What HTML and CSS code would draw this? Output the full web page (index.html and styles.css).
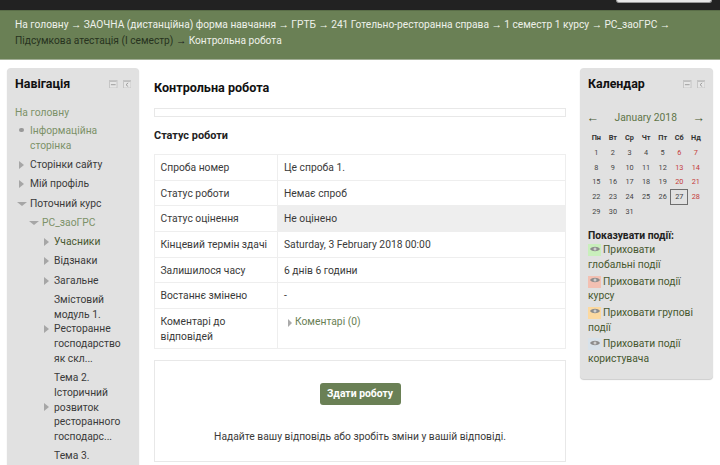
FILE: index.html
```html
<!DOCTYPE html>
<html lang="uk">
<head>
<meta charset="utf-8">
<title>Контрольна робота</title>
<link rel="stylesheet" href="styles.css">
</head>
<body>
<header class="topbar"><div class="search"></div></header>
<nav class="crumbs">
<a href="#">На головну</a> <span class="sep">→</span> <a href="#">ЗАОЧНА (дистанційна) форма навчання</a> <span class="sep">→</span> <a href="#">ГРТБ</a> <span class="sep">→</span> <a href="#">241 Готельно-ресторанна справа</a> <span class="sep">→</span> <a href="#">1 семестр 1 курсу</a> <span class="sep">→</span> <a href="#">РС_заоГРС</a> <span class="sep">→</span> <a href="#" class="dim">Підсумкова атестація (І семестр)</a> <span class="sep">→</span> <a href="#">Контрольна робота</a>
</nav>
<div class="layout">
<aside class="block nav-block">
  <div class="block-head"><h2>Навігація</h2><div class="tools">
    <svg class="tool" viewBox="0 0 9 9"><rect x=".5" y=".5" width="8" height="8" fill="#e6e6e6" stroke="#c4c4c4"/><rect x="1" y="1" width="7" height="1" fill="#bbb"/><rect x="2" y="4.5" width="5" height="1" fill="#999"/></svg>
    <svg class="tool" viewBox="0 0 9 9"><rect x=".5" y=".5" width="8" height="8" fill="#e6e6e6" stroke="#c4c4c4"/><rect x="1" y="1" width="7" height="1" fill="#bbb"/><path d="M5.5 3 3.2 5l2.3 2" fill="none" stroke="#999"/></svg>
  </div></div>
  <a class="nav-home" href="#">На головну</a>
  <ul class="tree">
    <li class="item leaf lvl1 green"><span>Інформаційна сторінка</span></li>
    <li class="item closed lvl1"><span>Сторінки сайту</span></li>
    <li class="item closed lvl1"><span>Мій профіль</span></li>
    <li class="item open lvl1"><span>Поточний курс</span></li>
    <li class="item open lvl2 green"><span>РС_заоГРС</span></li>
    <li class="item closed lvl3 dark"><span>Учасники</span></li>
    <li class="item closed lvl3"><span>Відзнаки</span></li>
    <li class="item closed lvl3"><span>Загальне</span></li>
    <li class="item closed lvl3"><span>Змістовий модуль 1. Ресторанне господарство як скл...</span></li>
    <li class="item closed lvl3"><span>Тема 2. Історичний розвиток ресторанного господарс...</span></li>
    <li class="item plain lvl3"><span>Тема 3.</span></li>
  </ul>
</aside>
<main class="main">
  <h1>Контрольна робота</h1>
  <div class="intro"></div>
  <h3>Статус роботи</h3>
  <table class="status">
    <tr><th>Спроба номер</th><td>Це спроба 1.</td></tr>
    <tr><th>Статус роботи</th><td>Немає спроб</td></tr>
    <tr><th>Статус оцінення</th><td class="shade">Не оцінено</td></tr>
    <tr><th>Кінцевий термін здачі</th><td>Saturday, 3 February 2018 00:00</td></tr>
    <tr><th>Залишилося часу</th><td>6 днів 6 години</td></tr>
    <tr><th>Востаннє змінено</th><td>-</td></tr>
    <tr><th>Коментарі до відповідей</th><td><span class="comments"><i class="tri"></i><a href="#">Коментарі (0)</a></span></td></tr>
  </table>
  <section class="submit">
    <button type="button">Здати роботу</button>
    <p>Надайте вашу відповідь або зробіть зміни у вашій відповіді.</p>
  </section>
</main>
<aside class="block cal-block">
  <div class="block-head"><h2>Календар</h2><div class="tools">
    <svg class="tool" viewBox="0 0 9 9"><rect x=".5" y=".5" width="8" height="8" fill="#e6e6e6" stroke="#c4c4c4"/><rect x="1" y="1" width="7" height="1" fill="#bbb"/><rect x="2" y="4.5" width="5" height="1" fill="#999"/></svg>
    <svg class="tool" viewBox="0 0 9 9"><rect x=".5" y=".5" width="8" height="8" fill="#e6e6e6" stroke="#c4c4c4"/><rect x="1" y="1" width="7" height="1" fill="#bbb"/><path d="M5.5 3 3.2 5l2.3 2" fill="none" stroke="#999"/></svg>
  </div></div>
  <div class="month"><span>←</span><a href="#">January 2018</a><span>→</span></div>
  <div class="cal">
    <b>Пн</b><b>Вт</b><b>Ср</b><b>Чт</b><b>Пт</b><b>Сб</b><b>Нд</b>
    <span>1</span><span>2</span><span>3</span><span>4</span><span>5</span><span class="we">6</span><span class="we">7</span>
    <span>8</span><span>9</span><span>10</span><span>11</span><span>12</span><span class="we">13</span><span class="we">14</span>
    <span>15</span><span>16</span><span>17</span><span>18</span><span>19</span><span class="we">20</span><span class="we">21</span>
    <span>22</span><span>23</span><span>24</span><span>25</span><span>26</span><span class="today">27</span><span class="we">28</span>
    <span>29</span><span>30</span><span>31</span>
  </div>
  <div class="legend">
    <strong>Показувати події:</strong>
    <a href="#"><i class="eye global"><svg viewBox="0 0 10 6"><path d="M0 3C2 0 8 0 10 3 8 6 2 6 0 3Z" fill="#8c8c8c"/><circle cx="5" cy="3" r="1.5" fill="#cfcfcf"/></svg></i>Приховати глобальні події</a>
    <a href="#"><i class="eye course"><svg viewBox="0 0 10 6"><path d="M0 3C2 0 8 0 10 3 8 6 2 6 0 3Z" fill="#8c8c8c"/><circle cx="5" cy="3" r="1.5" fill="#cfcfcf"/></svg></i>Приховати події курсу</a>
    <a href="#"><i class="eye group"><svg viewBox="0 0 10 6"><path d="M0 3C2 0 8 0 10 3 8 6 2 6 0 3Z" fill="#8c8c8c"/><circle cx="5" cy="3" r="1.5" fill="#cfcfcf"/></svg></i>Приховати групові події</a>
    <a href="#"><i class="eye user"><svg viewBox="0 0 10 6"><path d="M0 3C2 0 8 0 10 3 8 6 2 6 0 3Z" fill="#8c8c8c"/><circle cx="5" cy="3" r="1.5" fill="#cfcfcf"/></svg></i>Приховати події користувача</a>
  </div>
</aside>
</div>
</body>
</html>
```
FILE: styles.css
```css
* { box-sizing: border-box; }
html, body { margin: 0; height: 465px; overflow: hidden; background: #fff; }
body { font: 10.3px/14.7px Roboto, "Liberation Sans", sans-serif; color: #3a3a3a; }
a { color: inherit; text-decoration: none; }

.topbar { height: 10px; background: #222; display: flex; justify-content: flex-end; padding-right: 8px; }
.search { width: 96px; height: 3px; background: #e8e8e8; border: 1px solid #999; border-top: 0; border-radius: 0 0 3px 3px; }

.crumbs { height: 50px; padding: 6px 15px 0; background: #6a8055; border-top: 1px solid #5a6e48; border-bottom: 1px solid #a2ae96; color: #eef1ea; font-size: 10.2px; line-height: 16px; }
.crumbs .dim { color: #27321e; }
.crumbs .dim + .sep { color: #222; }

.layout { display: grid; grid-template-columns: 132px 441px 133px; padding: 8px 7px 0; align-items: start; }

.block { background: #e1e1e1; border-radius: 4px; box-shadow: 0 1px 1px #ccc; padding: 7px 8px; }
.block-head { display: flex; justify-content: space-between; align-items: center; height: 18px; }
h2 { margin: 0; font-size: 12.4px; font-weight: 700; color: #111; }
.tools { display: flex; gap: 5px; }
.tool { width: 8.5px; height: 8.5px; display: block; }

.nav-home { display: block; margin-top: 13px; color: #7c9168; }
.tree { list-style: none; margin: 1px 0 0; padding: 0; }
.item { position: relative; padding: 2.3px 0; color: #3a3a3a; display: flex; align-items: center; }
.lvl1 { padding-left: 15px; }
.lvl2 { padding-left: 27px; }
.lvl3 { padding-left: 39px; }
.green { color: #7c9168; }
.dark { color: #47582f; }
.closed::before, .open::before, .leaf::before { content: ""; position: absolute; top: 50%; }
.closed::before { margin-top: -4.5px; border-left: 5px solid #a6a6a6; border-top: 4.5px solid transparent; border-bottom: 4.5px solid transparent; }
.open::before { margin-top: -2px; border-top: 4.5px solid #a6a6a6; border-left: 5px solid transparent; border-right: 5px solid transparent; }
.lvl1.closed::before { left: 4px; }
.lvl1.open::before { left: 2px; }
.lvl2.open::before { left: 14px; }
.lvl3.closed::before { left: 28.5px; }
.leaf::before { left: 4px; top: 6px; width: 4.5px; height: 4.5px; border-radius: 50%; background: #999; }

.main { min-width: 0; margin: 0 14px 0 15px; }
h1 { margin: 11px 0 11px; font-size: 12.6px; line-height: 18px; font-weight: 700; color: #111; }
.intro { height: 9px; border: 1px solid #e8e8e8; }
h3 { margin: 12px 0 11px; font-size: 10.9px; line-height: 14px; font-weight: 700; color: #222; }
.status { width: 100%; border-collapse: collapse; table-layout: fixed; }
.status th, .status td { border: 1px solid #eee; padding: 6px 6px 3px; height: 25.7px; text-align: left; vertical-align: top; font-weight: 400; }
.status th { width: 123px; padding-left: 5.5px; }
.shade { background: #eee; }
.comments { display: block; padding-left: 11px; position: relative; color: #6a8055; }
.tri { position: absolute; left: 3.5px; top: 3.5px; border-left: 4.5px solid #aaa; border-top: 4px solid transparent; border-bottom: 4px solid transparent; }
.submit { margin-top: 11px; height: 102px; border: 1px solid #e8e8e8; padding-top: 22px; text-align: center; }
.submit button { display: block; margin: 0 auto; width: 81px; height: 22px; padding: 0; border: 0; border-radius: 3px; background: #6a8055; color: #fff; font: 700 10.4px Roboto, "Liberation Sans", sans-serif; }
.submit p { margin: 25px 0 0; }

.month { display: flex; justify-content: space-between; align-items: center; margin-top: 17px; color: #47582f; height: 16px; }
.month span { font-size: 12.5px; }
.month span:first-child { margin-left: -1.5px; }
.month a { color: #5f7548; }
.cal { display: grid; grid-template-columns: repeat(7, 16.6px); grid-auto-rows: 14.7px; justify-items: center; align-items: center; margin-top: 5px; font-size: 7.3px; color: #444; line-height: 10px; }
.cal b { font-weight: 700; color: #333; }
.cal .we { color: #c43c3c; }
.cal .today { width: 18px; height: 16px; line-height: 13px; text-align: center; border: 1.5px solid #6e6e6e; }
.legend { margin-top: 10px; padding: 0 3px 3px 0; }
.legend strong { display: block; color: #222; font-weight: 700; line-height: 14px; }
.legend a { display: block; color: #47582f; margin-bottom: 2px; }
.eye { display: inline-flex; justify-content: center; width: 13px; height: 12px; margin: 1px 2px 0 0; vertical-align: top; padding-top: 1.5px; }
.eye svg { width: 10px; height: 6px; }
.global { background: #c9efbc; }
.course { background: #f3c0b2; }
.group { background: #fcd9a0; }
.user { background: #d8e2ea; }
```
